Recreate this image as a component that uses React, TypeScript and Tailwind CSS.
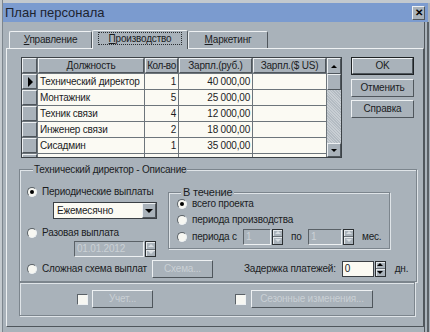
import React from "react";

const raised =
  "border border-t-[#eef1f3] border-l-[#eef1f3] border-r-[#4f565c] border-b-[#4f565c]";
const sunken =
  "border border-t-[#5a6167] border-l-[#5a6167] border-r-[#eef1f3] border-b-[#eef1f3]";
const etched =
  "border border-[#7c858d] shadow-[inset_1px_1px_0_#dfe4e8,1px_1px_0_#dfe4e8]";

function Radio({ checked }: { checked?: boolean }) {
  return (
    <span
      className={`w-[10px] h-[10px] rounded-full bg-[#f7f7f2] ${sunken} flex items-center justify-center shrink-0`}
    >
      {checked && <span className="w-[4px] h-[4px] rounded-full bg-black" />}
    </span>
  );
}

function Up({ color = "border-b-black" }: { color?: string }) {
  return <span className={`w-0 h-0 border-x-[3px] border-x-transparent border-b-[3px] ${color}`} />;
}
function Down({ color = "border-t-black" }: { color?: string }) {
  return <span className={`w-0 h-0 border-x-[3px] border-x-transparent border-t-[3px] ${color}`} />;
}

function Spin({ disabled, h = "h-[16px]" }: { disabled?: boolean; h?: string }) {
  return (
    <div className={`w-[11px] ${h} flex flex-col border border-[#2a2e31] bg-[#a9b2ba] shrink-0`}>
      <div className="flex-1 flex items-center justify-center border-b border-[#6a7177] shadow-[inset_1px_1px_0_#e6eaed]">
        <Up color={disabled ? "border-b-[#d8dde1]" : "border-b-black"} />
      </div>
      <div className="flex-1 flex items-center justify-center shadow-[inset_1px_1px_0_#e6eaed]">
        <Down color={disabled ? "border-t-[#d8dde1]" : "border-t-black"} />
      </div>
    </div>
  );
}

function Btn({ children, w, disabled, def }: { children: React.ReactNode; w: string; disabled?: boolean; def?: boolean }) {
  return (
    <div className={`${w} ${def ? "border border-[#1e2225]" : ""} shrink-0`}>
      <div
        className={`h-full ${raised} flex items-center justify-center whitespace-nowrap ${
          disabled ? "text-[#c9d0d5]" : "text-[#1b1d1f]"
        }`}
      >
        {children}
      </div>
    </div>
  );
}

const rows = [
  ["Технический директор", "1", "40 000,00"],
  ["Монтажник", "5", "25 000,00"],
  ["Техник связи", "4", "12 000,00"],
  ["Инженер связи", "2", "18 000,00"],
  ["Сисадмин", "1", "35 000,00"],
  ["", "", ""],
];

export default function App() {
  return (
    <div className="w-[430px] h-[332px] bg-[#a9b2ba] overflow-hidden flex font-['Liberation_Sans',Arial,sans-serif] text-[10px] tracking-[-0.2px] whitespace-nowrap text-[#1b1d1f] leading-none">
      {/* left strip */}
      <div className="w-[3px] h-full bg-[#c3c9ce] border-r border-[#7c858d] shrink-0" />
      <div className="flex-1 flex flex-col">
        <div className="h-[3px] bg-[#c3c9ce] shrink-0" />
        {/* title bar */}
        <div className="h-[19px] w-[425px] bg-[#7b9bcf] flex items-center justify-between pl-[2px] pr-[3px] shrink-0">
          <span className="text-[13px] tracking-normal text-[#1d2430]">План персонала</span>
          <div className={`w-[13px] h-[14px] bg-[#a9b2ba] ${raised} flex items-center justify-center text-[10px] font-bold text-black`}>
            ✕
          </div>
        </div>
        {/* body */}
        <div className="flex flex-1">
          <div className="w-[421px] flex flex-col">
            {/* tabs */}
            <div className="flex items-end h-[26px] pl-[6px] shrink-0">
              <div className={`w-[83px] h-[17px] border border-b-0 border-t-[#eef1f3] border-l-[#eef1f3] border-r-[#4f565c] rounded-t-[2px] flex items-center justify-center`}>
                <span><span className="underline">У</span>правление</span>
              </div>
              <div className={`w-[96px] h-[19px] -mb-px z-10 bg-[#a9b2ba] border border-b-0 border-t-[#eef1f3] border-l-[#eef1f3] border-r-[#4f565c] rounded-t-[2px] flex items-start justify-center pt-[1px]`}>
                <span className="border border-dotted border-[#2a2e31] px-[10px] h-[13px] flex items-center">
                  <span className="underline">П</span>роизводство
                </span>
              </div>
              <div className={`w-[80px] h-[17px] border border-b-0 border-t-[#eef1f3] border-l-[#eef1f3] border-r-[#4f565c] rounded-t-[2px] flex items-center justify-center`}>
                <span><span className="underline">М</span>аркетинг</span>
              </div>
            </div>
            {/* panel */}
            <div className={`ml-[3px] w-[418px] h-[279px] ${raised} shrink-0 flex flex-col`}>
              {/* table + buttons */}
              <div className="flex pl-[14px] pt-[8px]">
                <div className="flex h-[101px] border border-[#3c4247] overflow-hidden">
                  <div className="grid grid-cols-[15px_106px_33px_73px_73px] auto-rows-[15px] gap-px bg-[#6d757b] w-[304px] content-start">
                    <div className={`bg-[#a9b2ba] ${raised}`} />
                    <div className={`bg-[#a9b2ba] ${raised} flex items-center justify-center`}>Должность</div>
                    <div className={`bg-[#a9b2ba] ${raised} flex items-center justify-center tracking-[-0.4px]`}>Кол-во</div>
                    <div className={`bg-[#a9b2ba] ${raised} flex items-center justify-center`}>Зарпл.(руб.)</div>
                    <div className={`bg-[#a9b2ba] ${raised} flex items-center justify-center`}>Зарпл.($ US)</div>
                    {rows.map((r, i) => (
                      <React.Fragment key={i}>
                        <div className={`bg-[#a9b2ba] ${raised} flex items-center justify-center`}>
                          {i === 0 && (
                            <span className="w-0 h-0 border-y-[5px] border-y-transparent border-l-[5px] border-l-black ml-[2px]" />
                          )}
                        </div>
                        <div className="bg-[#fbfaf3] flex items-center pl-[2px]">{r[0]}</div>
                        <div className="bg-[#fbfaf3] flex items-center justify-end pr-[2px]">{r[1]}</div>
                        <div className="bg-[#fbfaf3] flex items-center justify-end pr-[2px]">{r[2]}</div>
                        <div className="bg-[#fbfaf3]" />
                      </React.Fragment>
                    ))}
                  </div>
                  {/* scrollbar */}
                  <div className="w-[15px] flex flex-col bg-[#c5cbd0] border-l border-[#6d757b]">
                    <div className={`h-[16px] bg-[#a9b2ba] ${raised} flex items-center justify-center`}>
                      <Up />
                    </div>
                    <div className={`h-[16px] bg-[#a9b2ba] ${raised}`} />
                    <div className="flex-1 bg-[repeating-linear-gradient(45deg,#c9cfd4_0_1px,#b3bbc2_1px_2px)]" />
                    <div className={`h-[14px] bg-[#a9b2ba] ${raised} flex items-center justify-center`}>
                      <Down />
                    </div>
                  </div>
                </div>
                <div className="ml-[9px] flex flex-col">
                  <Btn w="w-[63px] h-[18px]" def>OK</Btn>
                  <div className="h-[4px]" />
                  <Btn w="w-[63px] h-[18px]">Отменить</Btn>
                  <div className="h-[3px]" />
                  <Btn w="w-[63px] h-[18px]">Справка</Btn>
                </div>
              </div>

              {/* description group */}
              <fieldset className={`ml-[12px] mt-[5px] w-[396px] h-[119px] ${etched} pl-[7px] pr-[8px]`}>
                <legend className="ml-[6px] px-[1px] bg-[#a9b2ba] leading-[13px]">Технический директор - Описание</legend>
                <div className="flex mt-[10px]">
                  <div className="w-[141px] flex flex-col">
                    <div className="h-[12px] flex items-center gap-[5px]">
                      <Radio checked />
                      <span>Периодические выплаты</span>
                    </div>
                    <div className="mt-[4px] ml-[26px] w-[104px] h-[17px] bg-[#fbfaf3] border border-[#3a3f44] flex">
                      <span className="flex-1 flex items-center pl-[3px]">Ежемесячно</span>
                      <div className={`w-[14px] bg-[#a9b2ba] ${raised} flex items-center justify-center`}>
                        <span className="w-0 h-0 border-x-[4px] border-x-transparent border-t-[4px] border-t-black" />
                      </div>
                    </div>
                    <div className="mt-[8px] h-[12px] flex items-center gap-[5px]">
                      <Radio />
                      <span>Разовая выплата</span>
                    </div>
                    <div className="mt-[2px] ml-[47px] flex gap-[1px]">
                      <div className={`w-[70px] h-[16px] ${sunken} flex items-center pl-[2px] text-[#cbd1d6]`}>01.01.2012</div>
                      <Spin disabled />
                    </div>
                  </div>
                  <fieldset className={`w-[222px] h-[63px] ${etched} pl-[8px]`}>
                    <legend className="ml-[4px] px-[2px] bg-[#a9b2ba] leading-[13px] text-[11px]">В течение</legend>
                    <div className="flex flex-col -mt-[3px]">
                      <div className="h-[16px] flex items-center gap-[5px]">
                        <Radio checked />
                        <span>всего проекта</span>
                      </div>
                      <div className="h-[16px] flex items-center gap-[5px]">
                        <Radio />
                        <span>периода производства</span>
                      </div>
                      <div className="h-[17px] flex items-center">
                        <Radio />
                        <span className="ml-[5px] w-[51px]">периода с</span>
                        <div className={`w-[28px] h-[16px] ${sunken} flex items-center pl-[2px] text-[#cbd1d6]`}>1</div>
                        <div className="ml-[1px]"><Spin disabled /></div>
                        <span className="ml-[8px] w-[17px]">по</span>
                        <div className={`w-[34px] h-[16px] ${sunken} flex items-center pl-[2px] text-[#cbd1d6]`}>1</div>
                        <div className="ml-[1px]"><Spin disabled /></div>
                        <span className="ml-[8px]">мес.</span>
                      </div>
                    </div>
                  </fieldset>
                </div>
                <div className="mt-[2px] flex items-center h-[19px]">
                  <Radio />
                  <span className="ml-[5px] w-[110px]">Сложная схема выплат</span>
                  <Btn w="w-[61px] h-[18px]" disabled>Схема...</Btn>
                  <span className="ml-[31px]">Задержка платежей:</span>
                  <div className="ml-[6px] w-[32px] h-[16px] bg-[#fbfaf3] border border-[#3a3f44] flex items-center pl-[2px]">0</div>
                  <div className="ml-[1px]"><Spin /></div>
                  <span className="ml-[9px]">дн.</span>
                </div>
              </fieldset>

              {/* bottom box */}
              <div className={`ml-[12px] w-[396px] h-[34px] ${etched} flex items-center`}>
                <span className={`ml-[57px] w-[11px] h-[11px] bg-[#f7f7f2] ${sunken}`} />
                <div className="ml-[4px]">
                  <Btn w="w-[61px] h-[18px]" disabled>Учет...</Btn>
                </div>
                <span className={`ml-[82px] w-[11px] h-[11px] bg-[#f7f7f2] ${sunken}`} />
                <div className="ml-[5px]">
                  <Btn w="w-[122px] h-[18px]" disabled>Сезонные изменения...</Btn>
                </div>
              </div>
            </div>
          </div>
          {/* right edge */}
          <div className="w-[3px] border-l border-[#4f565c] bg-[#a9b2ba]" />
          <div className="w-[2px] bg-[#5a6167]" />
        </div>
      </div>
    </div>
  );
}
